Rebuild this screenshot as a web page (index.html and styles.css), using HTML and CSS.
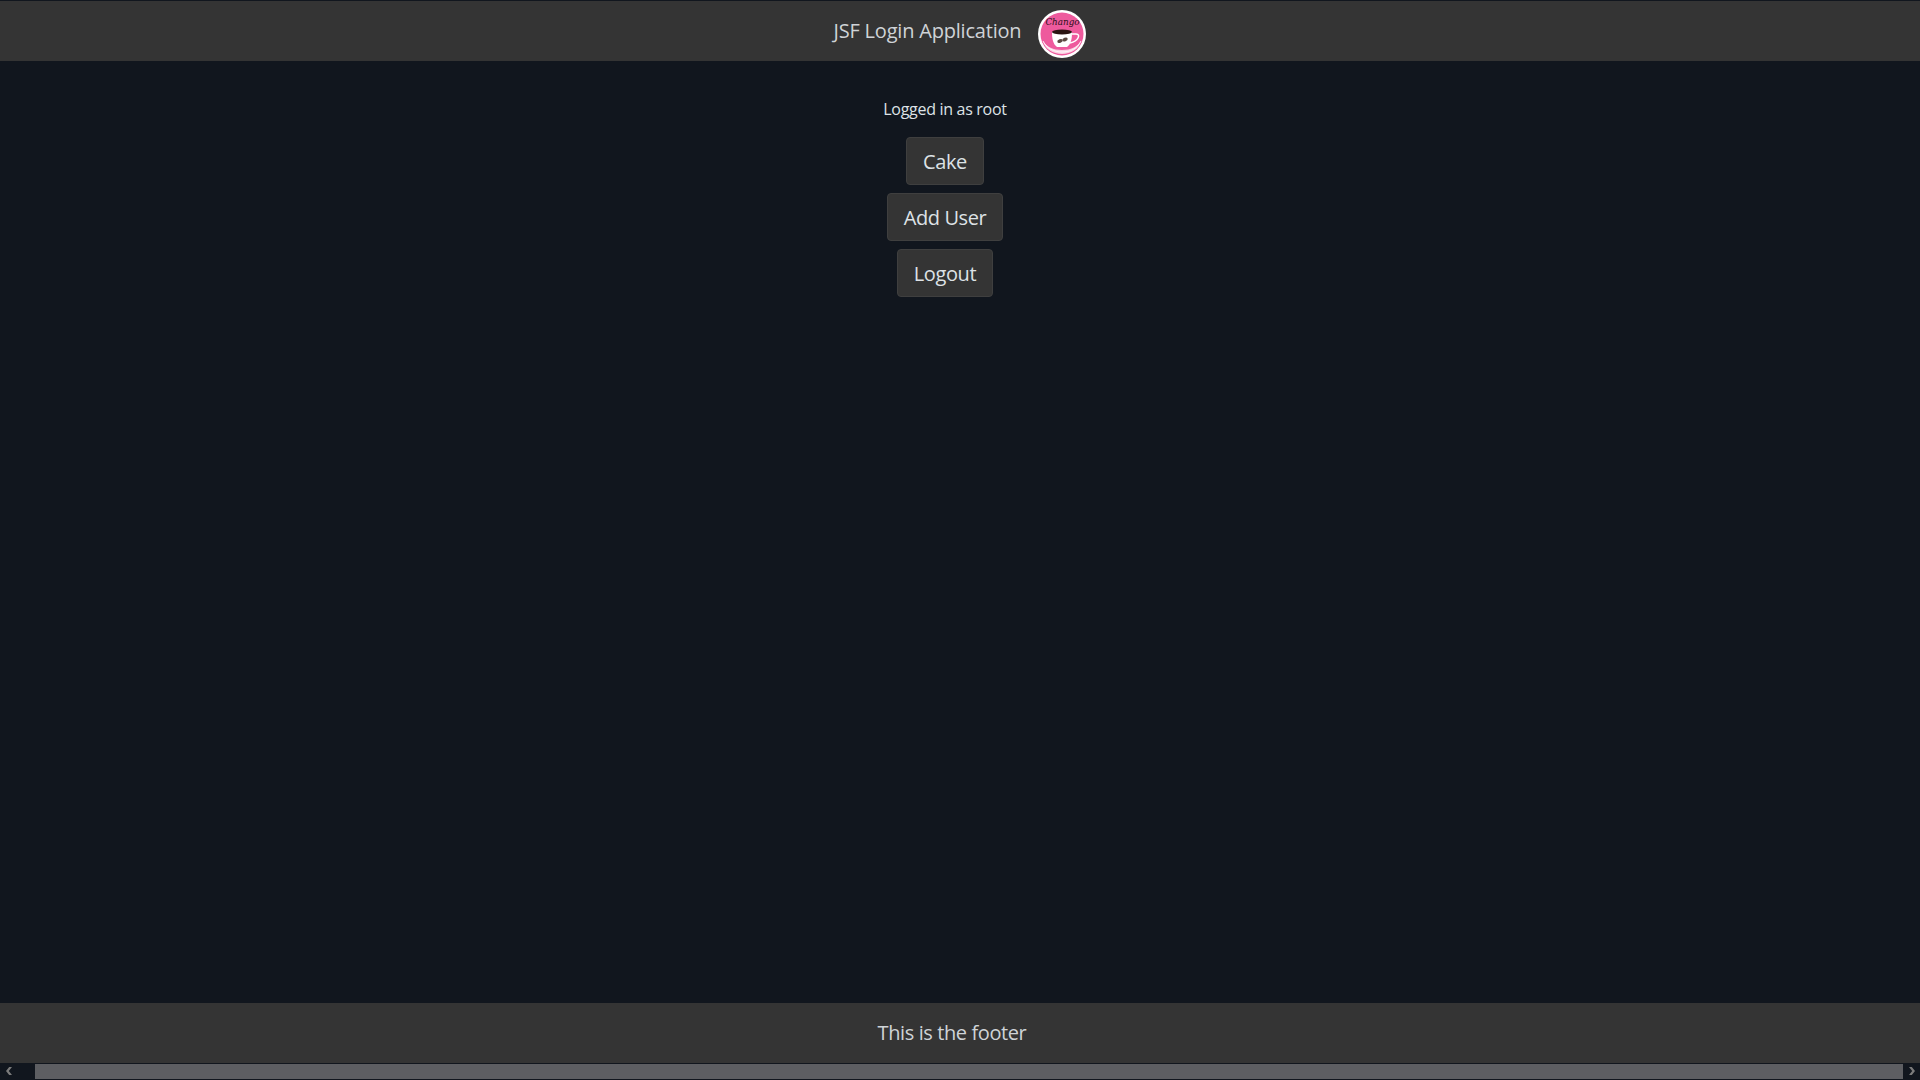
FILE: index.html
```html
<!DOCTYPE html>
<html lang="en">
<head>
  <meta charset="UTF-8">
  <title>JSF Login Application</title>
  <link rel="stylesheet" href="styles.css">
</head>
<body>
  <div class="page">
    <header class="header">
      <span class="title">JSF Login Application</span>
      <svg class="logo" width="48" height="48" viewBox="0 0 48 48">
        <circle cx="24" cy="24" r="24" fill="#fff"/>
        <circle cx="24" cy="24" r="21.500" fill="#ee5a9d"/>
        <path d="M5 31c2 8 10 13 19 13s17-5 19-13c-4 6-10 9-19 9S9 37 5 31z" fill="#fbd3e4"/>
        <path d="M5 31c3 7 11 11 19 11s15-3 19-11" fill="none" stroke="#fff" stroke-width="0.800"/>
        <path d="M14 22h20c0 7-1 12-5 15H19c-4-3-5-8-5-15z" fill="#fff"/>
        <path d="M34 24h4c3 0 3 2 2 4s-4 4-8 5" fill="none" stroke="#fff" stroke-width="1.500"/>
        <ellipse cx="24" cy="22" rx="10" ry="2.500" fill="#2a1512"/>
        <ellipse cx="22" cy="31" rx="2.800" ry="1.800" fill="#5b4a42" transform="rotate(-20 22 31)"/>
        <ellipse cx="27" cy="29.500" rx="2.800" ry="1.800" fill="#5b4a42" transform="rotate(-20 27 29.500)"/>
        <text class="logo-text" x="24.500" y="15" text-anchor="middle">Chango</text>
      </svg>
    </header>
    <main class="main">
      <p class="status">Logged in as root</p>
      <button class="btn">Cake</button>
      <button class="btn">Add User</button>
      <button class="btn">Logout</button>
    </main>
    <footer class="footer">This is the footer</footer>
    <div class="scrollbar">
      <span class="arrow">
        <svg width="6" height="8" viewBox="0 0 6 8"><path d="M6 0L2.800 4 6 8H3.200L0 4 3.200 0z" fill="#7b7b7b"/></svg>
      </span>
      <div class="track"><div class="thumb"></div></div>
      <span class="arrow">
        <svg width="6" height="8" viewBox="0 0 6 8"><path d="M0 0L3.200 4 0 8H2.800L6 4 2.800 0z" fill="#7b7b7b"/></svg>
      </span>
    </div>
  </div>
</body>
</html>
```

FILE: styles.css
```css
* {
  box-sizing: border-box;
  padding: 0;
  margin: 0;
}
html, body {
  height: 100%;
  overflow: hidden;
}
body {
  background: #11161e;
  color: #dee2e6;
  font-family: "Open Sans", "Noto Sans", sans-serif;
}
.page {
  display: flex;
  flex-direction: column;
  height: 1080px;
}
.header {
  display: flex;
  align-items: center;
  justify-content: center;
  gap: 17px;
  height: 61px;
  padding-top: 5px;
  border-top: 1px solid #11161e;
  background: #343434;
}
.title {
  margin-top: -6px;
  font-size: 20px;
  letter-spacing: -0.2px;
  color: #cfd3d7;
}
.logo-text {
  font-family: "DejaVu Serif", serif;
  font-size: 8.800px;
  font-style: italic;
  fill: #2a1018;
}
.main {
  display: flex;
  flex-direction: column;
  align-items: center;
  flex: 1;
  gap: 8px;
  padding: 36px 30px 0 0;
}
.status {
  margin-bottom: 8px;
  font-size: 16px;
  line-height: 24px;
  letter-spacing: -0.3px;
}
.btn {
  height: 48px;
  padding: 0 16px;
  border: 1px solid #3f3f3f;
  border-radius: 4px;
  background: #343434;
  color: #dee2e6;
  font-family: inherit;
  font-size: 20px;
  letter-spacing: -0.4px;
}
.footer {
  display: flex;
  align-items: center;
  justify-content: center;
  height: 60px;
  padding: 0 16px 2px 0;
  background: #343434;
  color: #cfd3d7;
  font-size: 20px;
  letter-spacing: -0.4px;
}
.scrollbar {
  display: flex;
  height: 17px;
  background: #11161e;
}
.arrow {
  display: flex;
  align-items: center;
  justify-content: center;
  width: 17px;
  padding-bottom: 1px;
}
.track {
  flex: 1;
  padding: 1px 0 1px 18px;
}
.thumb {
  height: 100%;
  background: #5d5e62;
}
```
